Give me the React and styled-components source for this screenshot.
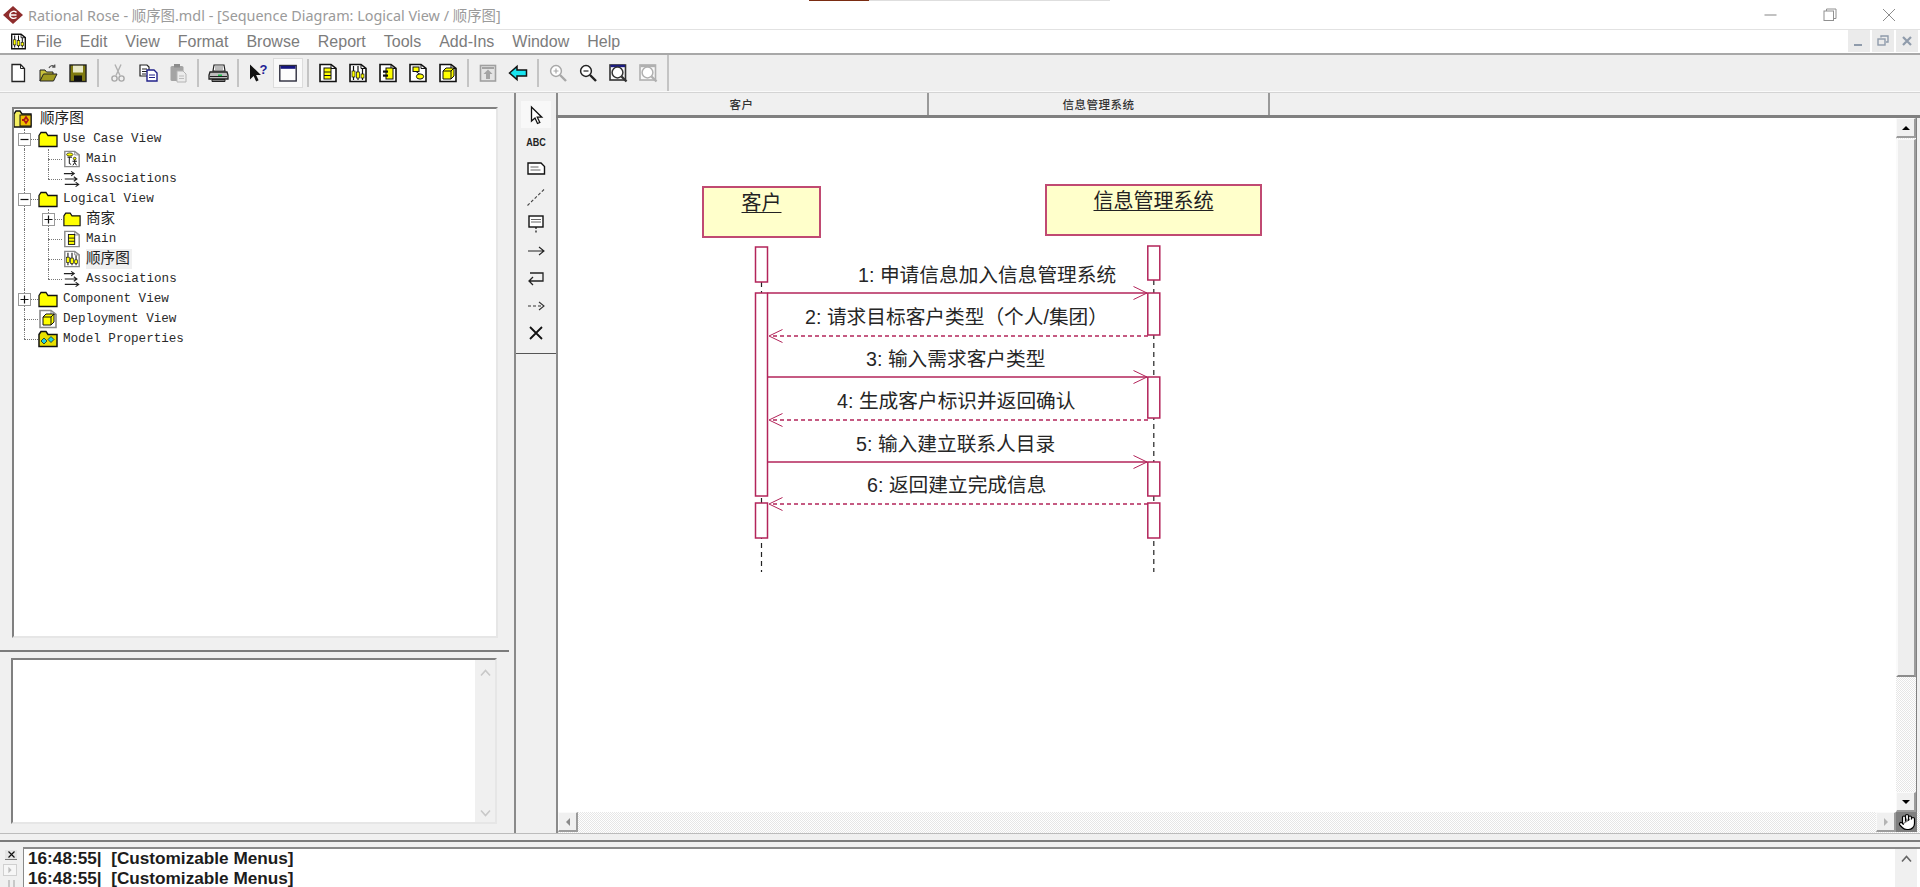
import styled, { createGlobalStyle } from 'styled-components'
import { Hand } from 'lucide-react'

const CJK = '"Noto Sans CJK SC"'

const Global = createGlobalStyle`
html, body { margin: 0; padding: 0; background: #f0f0f0; overflow: hidden; }
* { box-sizing: border-box; }
`

const Page = styled.div`
width: 1920px;
height: 887px;
display: flex;
flex-direction: column;
overflow: hidden;
background: #f0f0f0;
font-family: "Liberation Sans", ${CJK}, sans-serif;
`

/* ---------- title + menu ---------- */

const TitleBar = styled.div`
position: relative;
height: 30px;
flex: none;
display: flex;
align-items: center;
background: #fff;
border-bottom: 1px solid #e2e2e2;
padding-left: 3px;

&::before {
  content: '';
  position: absolute;
  top: 0;
  left: 809px;
  width: 301px;
  height: 1px;
  background: linear-gradient(to right, #7a2c12 0 60px, #dedede 60px);
}
`

const TitleText = styled.div`
margin-left: 5px;
font-family: "Noto Sans", ${CJK}, sans-serif;
font-size: 14.4px;
color: #9a9a9a;
white-space: pre;
`

const WinButtons = styled.div`
margin-left: auto;
margin-right: 2px;
display: flex;
`

const WinButton = styled.div`
width: 59px;
height: 29px;
display: flex;
align-items: center;
justify-content: center;
`

const MenuBar = styled.div`
height: 25px;
flex: none;
display: flex;
align-items: center;
background: #fff;
border-bottom: 2px solid #a8a8a8;
padding-left: 10px;
`

const MenuItems = styled.div`
display: flex;
gap: 18px;
margin-left: 9px;
font-size: 16px;
color: #7c7c7c;
`

const MdiButtons = styled.div`
margin-left: auto;
margin-right: 2px;
display: flex;
gap: 2px;
align-self: flex-start;
`

const MdiButton = styled.div`
width: 22px;
height: 22px;
background: #ebebeb;
display: flex;
align-items: center;
justify-content: center;
`

/* ---------- toolbar ---------- */

const Toolbar = styled.div`
height: 37px;
flex: none;
display: flex;
align-items: center;
padding-left: 3px;
background: #efefef;
border-bottom: 1px solid #fafafa;
`

const ToolButton = styled.div`
width: 30px;
height: 30px;
display: flex;
align-items: center;
justify-content: center;
background: ${p => (p.$pressed ? '#f9f9f9' : 'transparent')};
box-shadow: ${p => (p.$pressed ? 'inset 0 0 0 1px #dcdcdc' : 'none')};
`

const ToolSep = styled.div`
width: 10px;
height: ${p => (p.$tall ? 36 : 28)}px;
display: flex;
justify-content: center;

&::before {
  content: '';
  width: 2px;
  background: #c4c4c4;
}
`

/* ---------- workspace ---------- */

const Workspace = styled.div`
height: 741px;
flex: none;
display: flex;
border-top: 1px solid #d4d4d4;
`

const LeftPane = styled.div`
width: 514px;
flex: none;
display: flex;
flex-direction: column;
padding-top: 14px;
`

const Sunken = styled.div`
background: #fff;
border-style: solid;
border-width: 2px;
border-color: #808080 #e6e6e6 #e6e6e6 #808080;
`

const TreeBox = styled(Sunken)`
margin-left: 12px;
width: 486px;
height: 531px;
font-family: "Liberation Mono", ${CJK}, monospace;
font-size: 12.6px;
color: #2a2a2a;
overflow: hidden;
`

const TreeRow = styled.div`
height: 20px;
display: flex;
align-items: center;
white-space: pre;
`

const Guide = styled.div`
position: relative;
width: 24px;
height: 20px;
flex: none;

&::before {
  content: '';
  position: absolute;
  left: 10px;
  top: 0;
  bottom: ${p => (p.$type === 'end' ? '10px' : '0')};
  border-left: 1px dotted #777;
}

&::after {
  content: '';
  position: absolute;
  left: 10px;
  right: 0;
  top: 10px;
  border-top: ${p => (p.$type === 'pipe' ? 'none' : '1px dotted #777')};
}
`

const Expander = styled.div`
position: absolute;
left: 4px;
top: 4px;
width: 13px;
height: 13px;
z-index: 1;
background: #fff;
border: 1px solid #9a9a9a;
display: flex;
align-items: center;
justify-content: center;
`

const IconSlot = styled.div`
flex: none;
display: flex;
align-items: center;
justify-content: center;
width: ${p => (p.$level === 2 ? 18 : 20)}px;
margin-left: ${p => (p.$level === 2 ? 1 : p.$level === 0 ? -1 : 0)}px;
margin-right: ${p => (p.$level === 0 ? 7 : 5)}px;
`

const TreeLabel = styled.span`
font-size: ${p => (p.$cjk ? '14.6px' : 'inherit')};
padding: ${p => (p.$selected ? '1px 2px 1px 0' : '0')};
background: ${p => (p.$selected ? '#f0f0f0' : 'transparent')};
color: ${p => (p.$cjk ? '#222' : 'inherit')};
line-height: 18px;
`

const HSplit = styled.div`
margin-top: 12px;
width: 509px;
height: 2px;
flex: none;
background: #7c7c7c;
`

const DocBox = styled(Sunken)`
margin: 6px 0 0 11px;
width: 486px;
height: 166px;
display: flex;
justify-content: flex-end;
`

const DocScroll = styled.div`
width: 20px;
background: #f0f0f0;
display: flex;
flex-direction: column;
align-items: center;
justify-content: space-between;
padding: 9px 0 5px;
`

const ToolColumn = styled.div`
width: 44px;
flex: none;
display: flex;
flex-direction: column;
align-items: stretch;
background: #f0f0f0;
border-left: 2px solid #8a8a8a;
border-right: 2px solid #8a8a8a;
`

const Toolbox = styled.div`
height: 261px;
flex: none;
display: flex;
flex-direction: column;
align-items: center;
padding-top: 8px;
border-bottom: 1px solid #555;
`

const BoxTool = styled.div`
width: 30px;
height: 27.3px;
display: flex;
align-items: center;
justify-content: center;
background: ${p => (p.$pressed ? '#f8f8f8' : 'transparent')};
`

const AbcGlyph = styled.span`
font-size: 11px;
font-weight: bold;
color: #222;
transform: scaleX(0.82);
`

/* ---------- diagram ---------- */

const DiagramColumn = styled.div`
flex: 1;
min-width: 0;
display: flex;
flex-direction: column;
`

const ColumnHeader = styled.div`
height: 25px;
flex: none;
display: flex;
border-bottom: 3px solid #808080;
margin-left: -2px;
`

const HeaderCell = styled.div`
width: ${p => p.$w}px;
height: 22px;
flex: none;
display: flex;
align-items: center;
justify-content: center;
font-family: ${CJK}, sans-serif;
font-size: 11.5px;
font-weight: 500;
color: #333;
border-right: ${p => (p.$last ? 'none' : '2px solid #9a9a9a')};
letter-spacing: 0.5px;
`

const CanvasRow = styled.div`
flex: 1;
min-height: 0;
display: flex;
`

const Canvas = styled.div`
position: relative;
flex: 1;
background: #fff;
overflow: hidden;
`

const DiagramSvg = styled.svg`
position: absolute;
left: 0;
top: 0;
`

const ObjectBox = styled.div`
position: absolute;
left: ${p => p.$x - ORIGIN.x}px;
top: ${p => p.$y - ORIGIN.y}px;
width: ${p => p.$w}px;
height: ${p => p.$h}px;
background: #ffffcb;
border: 2px solid #c04a72;
text-align: center;
font-family: ${CJK}, sans-serif;
font-size: 20px;
line-height: 24px;
padding-top: 2px;
color: #222;
`

const ObjectName = styled.span`
text-decoration: underline;
text-underline-offset: 2px;
text-decoration-thickness: 1px;
`

const MessageLabel = styled.div`
position: absolute;
left: ${p => p.$x - ORIGIN.x}px;
top: ${p => p.$y - ORIGIN.y - 13}px;
height: 26px;
line-height: 26px;
font-family: "Liberation Sans", ${CJK}, sans-serif;
font-size: 19.7px;
color: #262626;
white-space: pre;
`

const VScroll = styled.div`
width: 21px;
flex: none;
display: flex;
flex-direction: column;
background: repeating-conic-gradient(#fff 0 25%, #e6e6e6 0 50%) 0 0 / 2px 2px;
border-right: 1px solid #808080;
margin-right: 3px;
`

const ScrollBtn = styled.div`
width: 20px;
height: 20px;
flex: none;
display: flex;
align-items: center;
justify-content: center;
background: #f0f0f0;
border-style: solid;
border-width: 1px 2px 2px 1px;
border-color: #fafafa #9c9c9c #9c9c9c #fafafa;
`

const VThumb = styled.div`
height: 538px;
flex: none;
margin-top: 1px;
background: #eeeeee;
border-style: solid;
border-width: 1px 2px 2px 2px;
border-color: #fafafa #9c9c9c #8c8c8c #fafafa;
`

const VSpacer = styled.div`
flex: 1;
`

const HScrollRow = styled.div`
height: 21px;
flex: none;
display: flex;
align-items: flex-start;
padding-right: 3px;
background: repeating-conic-gradient(#fff 0 25%, #e6e6e6 0 50%) 0 0 / 2px 2px;
`

const HSpacer = styled.div`
flex: 1;
`

const HandBox = styled.div`
width: 21px;
height: 20px;
flex: none;
background: #7f7f7f;
display: flex;
align-items: center;
justify-content: center;
`

/* ---------- log ---------- */

const LogGap = styled.div`
height: 14px;
flex: none;
border-top: 1px solid #bcbcbc;
display: flex;
flex-direction: column;
padding-top: 6px;

&::before {
  content: '';
  height: 2px;
  background: #7c7c7c;
}
`

const LogArea = styled.div`
flex: 1;
min-height: 0;
display: flex;
`

const LogGutter = styled.div`
width: 23px;
flex: none;
display: flex;
flex-direction: column;
align-items: center;
padding-top: 3px;
gap: 4px;
`

const LogClose = styled.div`
width: 12px;
height: 11px;
background: #e4e4e4;
border-bottom: 1px solid #777;
display: flex;
align-items: center;
justify-content: center;
margin-left: -1px;
`

const LogNext = styled.div`
width: 14px;
height: 12px;
background: #f6f6f6;
border: 1px solid #d0d0d0;
display: flex;
align-items: center;
justify-content: center;
margin-left: -3px;
`

const LogGrip = styled.div`
width: 7px;
height: 8px;
border-left: 2px solid #c8c8c8;
border-right: 2px solid #c8c8c8;
`

const LogBox = styled.div`
flex: 1;
display: flex;
background: #fff;
border-top: 2px solid #8a8a8a;
border-left: 1px solid #8a8a8a;
padding-left: 4px;
`

const LogLines = styled.div`
flex: 1;
font-size: 17.2px;
font-weight: bold;
line-height: 19.5px;
color: #1c1c1c;
white-space: pre;
`

const LogScroll = styled.div`
width: 22px;
margin-right: 3px;
background: #f0f0f0;
display: flex;
justify-content: center;
padding-top: 6px;
`

/* ---------- icons ---------- */

const Ico = ({ size = 20, w, h, vb = '0 0 20 20', children }) => (
  <svg width={w || size} height={h || size} viewBox={vb} fill="none">
    {children}
  </svg>
)

const DocIcon = ({ size = 20, tone = '#111', children }) => (
  <Ico size={size}>
    <path d="M2 1.5h11l5 4v13H2z" fill="#fff" stroke={tone} strokeWidth="1.6" />
    <path d="M13 1.5v4h5" stroke={tone} strokeWidth="1" />
    {children}
  </Ico>
)

const classBody = (
  <>
    <rect x="6" y="5" width="7" height="11" fill="#ff0" stroke="#111" />
    <path d="M6 9h7M6 12.5h7" stroke="#111" />
  </>
)
const seqBody = (
  <>
    <path d="M5.5 3v14M10 3v14M14.5 6v11" stroke="#111" strokeWidth="1.2" />
    <rect x="4" y="8" width="3" height="6" fill="#ff0" stroke="#111" strokeWidth=".7" />
    <rect x="8.5" y="9" width="3" height="6" fill="#ff0" stroke="#111" strokeWidth=".7" />
    <rect x="13" y="11" width="3" height="4" fill="#ff0" stroke="#111" strokeWidth=".7" />
  </>
)
const compBody = (
  <>
    <rect x="8" y="5" width="7" height="11" fill="#ff0" stroke="#111" />
    <rect x="5" y="7.5" width="5" height="2.2" fill="#111" />
    <rect x="5" y="11.5" width="5" height="2.2" fill="#111" />
  </>
)
const useBody = (
  <>
    <rect x="5" y="4" width="6" height="4.5" fill="#ff0" stroke="#111" />
    <path d="M8 8.5l4 3" stroke="#111" />
    <ellipse cx="12" cy="13.5" rx="3.6" ry="2.6" fill="#ff0" stroke="#111" />
  </>
)
const actorBody = (
  <>
    <ellipse cx="7.5" cy="5" rx="3.5" ry="1.8" fill="#ff0" stroke="#111" strokeWidth=".8" />
    <path d="M5 8h5M7 8v7l2 1" stroke="#111" strokeWidth="1.1" />
    <circle cx="13" cy="9.5" r="1.5" fill="#ff0" stroke="#111" strokeWidth=".8" />
    <path d="M13 11v3M10.5 12.5h5M13 14l-2 3M13 14l2 3" stroke="#111" strokeWidth="1.1" />
  </>
)
const deployBody = (
  <>
    <path d="M5 8l3-3h8v8l-3 3H5z" fill="#ff0" stroke="#111" />
    <path d="M5 8h8v8M13 8l3-3" stroke="#111" />
  </>
)

const Folder = () => (
  <Ico w={20} h={18} vb="0 0 20 18">
    <path d="M1 5.5l2-3h5l2 3h9v11H1z" fill="#ff0" stroke="#111" strokeWidth="1.3" />
  </Ico>
)

const PropsFolder = () => (
  <Ico w={20} h={18} vb="0 0 20 18">
    <path d="M1 4.5l2-3h5l2 3h9v12H1z" fill="#e8e000" stroke="#111" strokeWidth="1.5" />
    <path d="M6 8l3 3-3 3-3-3zM13 6.5l3 3-3 3-3-3z" fill="#20d0e0" stroke="#111" strokeWidth=".7" />
  </Ico>
)

const RootIcon = () => (
  <Ico size={20}>
    <path d="M1 5l2-3h4l2 3h9v13H1z" fill="#f4ee60" stroke="#111" strokeWidth="1.4" />
    <rect x="7" y="6" width="11" height="11" fill="#f0c000" stroke="#111" />
    <path d="M9 11h2l2-3 2 3-2 3-2-3" stroke="#b01818" strokeWidth="1.8" />
  </Ico>
)

const AssocIcon = () => (
  <Ico w={18} h={20}>
    <path d="M1 4h11M9 1.5L12.5 4 9 6.5M2 10h13M12 7.5l3.5 2.5-3.5 2.5M2 16h15M14 13.5l3.5 2.5-3.5 2.5" stroke="#222" strokeWidth="1.2" />
  </Ico>
)

const NewIcon = () => (
  <Ico>
    <path d="M4 1.5h8.5l4 4v13H4z" fill="#fff" stroke="#222" strokeWidth="1.3" />
    <path d="M12.5 1.5v4h4" stroke="#222" />
  </Ico>
)
const OpenIcon = () => (
  <Ico>
    <path d="M2 7h5l1.5 2H15v3H6l-4 6z" fill="#c9c23c" stroke="#222" />
    <path d="M2 18l3.5-7H19l-3.5 7z" fill="#a09a20" stroke="#222" />
    <path d="M11 5c1-2.5 3.5-3 5.5-1.5M16.8 1.5v2.6h-2.6" stroke="#555" strokeWidth="1.2" />
  </Ico>
)
const SaveIcon = () => (
  <Ico>
    <rect x="2" y="2" width="16" height="16.5" fill="#7f7a10" stroke="#222" strokeWidth="1.4" />
    <rect x="5" y="2.7" width="10" height="6.8" fill="#e9e9c8" />
    <rect x="6" y="12.5" width="8" height="5.5" fill="#111" />
  </Ico>
)
const CutIcon = () => (
  <Ico>
    <path d="M7 1.5l5 11M13 1.5l-5 11" stroke="#b0b0b0" strokeWidth="1.4" />
    <circle cx="6.5" cy="15.5" r="2.6" stroke="#a8a8a8" strokeWidth="1.4" />
    <circle cx="13.5" cy="15.5" r="2.6" stroke="#a8a8a8" strokeWidth="1.4" />
  </Ico>
)
const CopyIcon = () => (
  <Ico>
    <path d="M2 2h7l2 2v9H2z" fill="#fff" stroke="#222" strokeWidth="1.2" />
    <path d="M4 6h5M4 8.5h5M4 11h4" stroke="#222" />
    <path d="M9 7h7l3 3v8H9z" fill="#fff" stroke="#22228a" strokeWidth="1.4" />
    <path d="M11 12h6M11 14.5h6" stroke="#22228a" />
  </Ico>
)
const PasteIcon = () => (
  <Ico>
    <rect x="2.5" y="3" width="13" height="15" rx="1.5" fill="#a4a4a4" />
    <rect x="6" y="1" width="6" height="3.5" fill="#8c8c8c" />
    <path d="M9 8h6l3 3v8H9z" fill="#ececec" stroke="#b4b4b4" />
    <path d="M11 13h5M11 15.5h5" stroke="#bcbcbc" />
  </Ico>
)
const PrintIcon = () => (
  <Ico w={21} h={20} vb="0 0 21 20">
    <path d="M6 2h10l1 6H5z" fill="#fff" stroke="#222" strokeWidth="1.2" />
    <path d="M7 4h8M7 6h8" stroke="#777" />
    <path d="M2 9h17l1 3v4H1v-4z" fill="#bdbdbd" stroke="#222" strokeWidth="1.3" />
    <path d="M2 13.5h17" stroke="#222" />
    <rect x="10" y="11.5" width="4" height="1.5" fill="#22c050" />
    <path d="M4 16.5h13v2H4z" fill="#777" stroke="#222" />
  </Ico>
)
const HelpIcon = () => (
  <Ico>
    <path d="M2 1.5v15l3.6-3.4 2.6 5.4 2.4-1.2-2.5-5.2H13z" fill="#111" />
    <text x="11.5" y="10.5" fontFamily="Liberation Sans" fontWeight="bold" fontSize="13" fill="#1e1e96">?</text>
  </Ico>
)
const BrowseIcon = () => (
  <Ico>
    <rect x="1.8" y="2.5" width="16.4" height="15.5" fill="#fdfdfd" stroke="#2c2c3c" strokeWidth="1.4" />
    <rect x="2.5" y="3" width="15" height="2.8" fill="#16167e" />
  </Ico>
)
const UpDocIcon = () => (
  <Ico>
    <rect x="2.5" y="2.5" width="15" height="15.5" fill="#e4e4e4" stroke="#a0a0a0" strokeWidth="1.6" />
    <path d="M4 5h12" stroke="#888" strokeWidth="1.4" />
    <path d="M10 6.5l4.5 4.5h-2.5v5H8v-5H5.5z" fill="#a4a4a4" />
  </Ico>
)
const BackIcon = () => (
  <Ico>
    <path d="M1.5 10L9 3.5V7h9.5v6H9v3.5z" fill="#18e4f0" stroke="#111" strokeWidth="1.5" />
  </Ico>
)
const LensIcon = ({ tone, mark, frame }) => (
  <Ico>
    {frame && <rect x="2" y="2" width="15.5" height="15" fill="#f8f8f8" stroke={tone} strokeWidth="1.6" />}
    {frame && <path d="M2.5 3h14.5" stroke={frame} strokeWidth="2.4" />}
    <circle cx={frame ? 9.5 : 8} cy={frame ? 9.5 : 8} r="5.4" fill="#fff" stroke={tone} strokeWidth="1.5" />
    <path d={frame ? 'M13.5 13.5l5 5' : 'M12 12l6 6'} stroke={tone} strokeWidth="2.4" />
    {mark === 'plus' && <path d="M5.5 8h5M8 5.5v5" stroke={tone} strokeWidth="1.2" />}
    {mark === 'minus' && <path d="M5.5 8h5" stroke={tone} strokeWidth="1.2" />}
  </Ico>
)
const SelectTool = () => (
  <Ico>
    <path d="M5.5 2v14l3.5-3 2.5 5.5 2.3-1-2.5-5.3h4.5z" fill="#fff" stroke="#111" strokeWidth="1.3" />
  </Ico>
)
const NoteTool = () => (
  <Ico>
    <path d="M2 4h13l3.5 3.5V15H2z" fill="#fff" stroke="#111" strokeWidth="1.4" />
    <path d="M4.5 8h8M4.5 11h10" stroke="#666" />
  </Ico>
)
const AnchorTool = () => (
  <Ico>
    <path d="M1.5 18.5L18.5 2" stroke="#444" strokeWidth="1.1" strokeDasharray="3 2" />
  </Ico>
)
const NoteAnchorTool = () => (
  <Ico>
    <rect x="3" y="2" width="14" height="11" fill="#fff" stroke="#111" strokeWidth="1.4" />
    <path d="M5 5.5h10M5 8h10" stroke="#666" />
    <path d="M10 13v6" stroke="#111" strokeDasharray="2 1.5" strokeWidth="1.2" />
  </Ico>
)
const ArrowTool = () => (
  <Ico>
    <path d="M2 10h16M13 6l5 4-5 4" stroke="#222" strokeWidth="1.1" />
  </Ico>
)
const ReturnTool = () => (
  <Ico>
    <path d="M4 5h13v8H3M7 9l-4 4 4 4" stroke="#222" strokeWidth="1.3" />
  </Ico>
)
const DashTool = () => (
  <Ico>
    <path d="M2 10h16" stroke="#333" strokeWidth="1.1" strokeDasharray="3 2" />
    <path d="M13 6l5 4-5 4" stroke="#333" strokeWidth="1.1" />
  </Ico>
)
const CrossTool = () => (
  <Ico>
    <path d="M4 4l12 12M16 4L4 16" stroke="#111" strokeWidth="1.8" />
  </Ico>
)
const Tri = ({ dir, tone = '#000', s = 10 }) => {
  const d = {
    up: 'M1 7h8L5 3z',
    down: 'M1 3h8L5 7z',
    left: 'M7 1v8L3 5z',
    right: 'M3 1v8l4-4z',
  }[dir]
  return (
    <Ico size={s} vb="0 0 10 10">
      <path d={d} fill={tone} />
    </Ico>
  )
}
const Chevron = ({ up, tone }) => (
  <Ico w={11} h={8} vb="0 0 11 8">
    <path d={up ? 'M1 6.5l4.5-5 4.5 5' : 'M1 1.5l4.5 5 4.5-5'} stroke={tone} strokeWidth="1.6" />
  </Ico>
)
const RoseLogo = () => (
  <Ico w={20} h={18} vb="0 0 20 18">
    <path d="M10 0l10 9-10 9L0 9z" fill="#8f2d2d" />
    <path d="M13.5 6.5C12 4.5 8 5 7 8c-1 3.5 3 5.5 6.5 3.5M7.5 9h6" stroke="#fff" strokeWidth="1.4" />
  </Ico>
)
const MinGlyph = () => (
  <Ico size={14} vb="0 0 14 14">
    <path d="M0.5 7h12" stroke="#909090" strokeWidth="1.1" />
  </Ico>
)
const RestoreGlyph = () => (
  <Ico size={14} vb="0 0 14 14">
    <rect x="1" y="3" width="9.5" height="9.5" stroke="#909090" />
    <path d="M3.5 3V1h9.5v9.5h-2.5" stroke="#909090" />
  </Ico>
)
const CloseGlyph = () => (
  <Ico size={14} vb="0 0 14 14">
    <path d="M1 1l12 12M13 1L1 13" stroke="#8c8c8c" />
  </Ico>
)

const MDI_TONE = '#8f9bab'

/* ---------- data ---------- */

const ORIGIN = { x: 558, y: 118 }

const MENUS = ['File', 'Edit', 'View', 'Format', 'Browse', 'Report', 'Tools', 'Add-Ins', 'Window', 'Help']

const TOOLS = [
  <NewIcon />, <OpenIcon />, <SaveIcon />, 'sep',
  <CutIcon />, <CopyIcon />, <PasteIcon />, 'sep',
  <PrintIcon />, 'sep',
  <HelpIcon />, 'pressed', 'sep',
  <DocIcon>{classBody}</DocIcon>, <DocIcon>{seqBody}</DocIcon>, <DocIcon>{compBody}</DocIcon>,
  <DocIcon>{useBody}</DocIcon>, <DocIcon>{deployBody}</DocIcon>, 'sep',
  <UpDocIcon />, <BackIcon />, 'sep',
  <LensIcon tone="#a8a8a8" mark="plus" />, <LensIcon tone="#222" mark="minus" />,
  <LensIcon tone="#333" frame="#1c1c80" />, <LensIcon tone="#b0b0b0" frame="#b0b0b0" />,
  'tall',
]

const TREE_TONE = '#8a8a8a'

const TREE = [
  { level: 0, icon: <RootIcon />, label: '顺序图', cjk: true },
  { guides: ['tee'], exp: 'minus', level: 1, icon: <Folder />, label: 'Use Case View' },
  { guides: ['pipe', 'tee'], level: 2, icon: <DocIcon size={18} tone={TREE_TONE}>{actorBody}</DocIcon>, label: 'Main' },
  { guides: ['pipe', 'end'], level: 2, icon: <AssocIcon />, label: 'Associations' },
  { guides: ['tee'], exp: 'minus', level: 1, icon: <Folder />, label: 'Logical View' },
  { guides: ['pipe', 'tee'], exp: 'plus', level: 2, icon: <Folder />, label: '商家', cjk: true },
  { guides: ['pipe', 'tee'], level: 2, icon: <DocIcon size={18} tone={TREE_TONE}>{classBody}</DocIcon>, label: 'Main' },
  { guides: ['pipe', 'tee'], level: 2, icon: <DocIcon size={18} tone={TREE_TONE}>{seqBody}</DocIcon>, label: '顺序图', cjk: true, selected: true },
  { guides: ['pipe', 'end'], level: 2, icon: <AssocIcon />, label: 'Associations' },
  { guides: ['tee'], exp: 'plus', level: 1, icon: <Folder />, label: 'Component View' },
  { guides: ['tee'], level: 1, icon: <DocIcon tone={TREE_TONE}>{deployBody}</DocIcon>, label: 'Deployment View' },
  { guides: ['end'], level: 1, icon: <PropsFolder />, label: 'Model Properties' },
]

const BOX_TOOLS = [
  <SelectTool />, <AbcGlyph>ABC</AbcGlyph>, <NoteTool />, <AnchorTool />,
  <NoteAnchorTool />, <ArrowTool />, <ReturnTool />, <DashTool />, <CrossTool />,
]

const LEFT_X = 761.5
const RIGHT_X = 1153.8

const BARS = [
  [LEFT_X, 247, 282], [LEFT_X, 293, 496], [LEFT_X, 503, 538],
  [RIGHT_X, 246, 280], [RIGHT_X, 293, 335], [RIGHT_X, 377, 418], [RIGHT_X, 462, 496], [RIGHT_X, 503, 538],
]

const ARROWS = [
  { y: 293, right: true },
  { y: 336, right: false },
  { y: 377, right: true },
  { y: 420, right: false },
  { y: 462, right: true },
  { y: 504, right: false },
]

const LABELS = [
  { x: 858, y: 275, text: '1: 申请信息加入信息管理系统' },
  { x: 805, y: 317, text: '2: 请求目标客户类型（个人/集团）' },
  { x: 866, y: 359, text: '3: 输入需求客户类型' },
  { x: 837, y: 401, text: '4: 生成客户标识并返回确认' },
  { x: 856, y: 444, text: '5: 输入建立联系人目录' },
  { x: 867, y: 485, text: '6: 返回建立完成信息' },
]

const CRIMSON = '#b3245a'

function Diagram() {
  return (
    <DiagramSvg width="1338" height="695" viewBox={`${ORIGIN.x} ${ORIGIN.y} 1338 695`} fill="none">
      <path d={`M${LEFT_X} 282V572M${RIGHT_X} 280V572`} stroke="#222" strokeWidth="1.2" strokeDasharray="5 4" />
      {BARS.map(([x, a, b], i) => (
        <rect key={i} x={x - 6} y={a} width="12" height={b - a} fill="#fff" stroke={CRIMSON} strokeWidth="1.5" />
      ))}
      {ARROWS.map(({ y, right }) =>
        right ? (
          <g key={y} stroke={CRIMSON} strokeWidth="1.4">
            <path d={`M767.5 ${y}H1147`} />
            <path d={`M1133.5 ${y - 6.5}L1147 ${y}L1133.5 ${y + 6.5}`} strokeWidth="1" />
          </g>
        ) : (
          <g key={y} stroke={CRIMSON} strokeWidth="1.3">
            <path d={`M1148 ${y}H770`} strokeDasharray="4 3" />
            <path d={`M782.5 ${y - 6.5}L769 ${y}L782.5 ${y + 6.5}`} strokeWidth="1" />
          </g>
        )
      )}
    </DiagramSvg>
  )
}

export default function App() {
  return (
    <Page>
      <Global />
      <TitleBar>
        <RoseLogo />
        <TitleText>Rational Rose - 顺序图.mdl - [Sequence Diagram: Logical View / 顺序图]</TitleText>
        <WinButtons>
          <WinButton><MinGlyph /></WinButton>
          <WinButton><RestoreGlyph /></WinButton>
          <WinButton><CloseGlyph /></WinButton>
        </WinButtons>
      </TitleBar>

      <MenuBar>
        <DocIcon size={17}>{seqBody}</DocIcon>
        <MenuItems>
          {MENUS.map(m => <span key={m}>{m}</span>)}
        </MenuItems>
        <MdiButtons>
          <MdiButton>
            <Ico size={14} vb="0 0 14 14"><path d="M2 11h8" stroke={MDI_TONE} strokeWidth="2" /></Ico>
          </MdiButton>
          <MdiButton>
            <Ico size={14} vb="0 0 14 14">
              <rect x="2" y="5" width="7" height="6" stroke={MDI_TONE} strokeWidth="1.4" />
              <path d="M5 3.5V2h7v6h-2" stroke={MDI_TONE} strokeWidth="1.4" />
            </Ico>
          </MdiButton>
          <MdiButton>
            <Ico size={14} vb="0 0 14 14"><path d="M3 3l8 8M11 3l-8 8" stroke={MDI_TONE} strokeWidth="2.2" /></Ico>
          </MdiButton>
        </MdiButtons>
      </MenuBar>

      <Toolbar>
        {TOOLS.map((t, i) => {
          if (t === 'sep') return <ToolSep key={i} />
          if (t === 'tall') return <ToolSep key={i} $tall />
          if (t === 'pressed') return <ToolButton key={i} $pressed><BrowseIcon /></ToolButton>
          return <ToolButton key={i}>{t}</ToolButton>
        })}
      </Toolbar>

      <Workspace>
        <LeftPane>
          <TreeBox>
            {TREE.map((r, i) => (
              <TreeRow key={i}>
                {(r.guides || []).map((g, j) => {
                  const last = j === r.guides.length - 1
                  return (
                    <Guide key={j} $type={g}>
                      {last && r.exp && (
                        <Expander>
                          <Ico size={9} vb="0 0 9 9">
                            <path d={r.exp === 'plus' ? 'M.5 4.5h8M4.5 .5v8' : 'M.5 4.5h8'} stroke="#111" strokeWidth="1.2" />
                          </Ico>
                        </Expander>
                      )}
                    </Guide>
                  )
                })}
                <IconSlot $level={r.level}>{r.icon}</IconSlot>
                <TreeLabel $cjk={r.cjk} $selected={r.selected}>{r.label}</TreeLabel>
              </TreeRow>
            ))}
          </TreeBox>
          <HSplit />
          <DocBox>
            <DocScroll>
              <Chevron up tone="#c8c8c8" />
              <Chevron tone="#c8c8c8" />
            </DocScroll>
          </DocBox>
        </LeftPane>

        <ToolColumn>
          <Toolbox>
            {BOX_TOOLS.map((t, i) => (
              <BoxTool key={i} $pressed={i === 0}>{t}</BoxTool>
            ))}
          </Toolbox>
        </ToolColumn>

        <DiagramColumn>
          <ColumnHeader>
            <HeaderCell $w={373}>客户</HeaderCell>
            <HeaderCell $w={341}>信息管理系统</HeaderCell>
            <HeaderCell $w={650} $last />
          </ColumnHeader>
          <CanvasRow>
            <Canvas>
              <Diagram />
              <ObjectBox $x={702} $y={186} $w={119} $h={52}><ObjectName>客户</ObjectName></ObjectBox>
              <ObjectBox $x={1045} $y={184} $w={217} $h={52}><ObjectName>信息管理系统</ObjectName></ObjectBox>
              {LABELS.map(l => (
                <MessageLabel key={l.text} $x={l.x} $y={l.y}>{l.text}</MessageLabel>
              ))}
            </Canvas>
            <VScroll>
              <ScrollBtn><Tri dir="up" /></ScrollBtn>
              <VThumb />
              <VSpacer />
              <ScrollBtn><Tri dir="down" /></ScrollBtn>
            </VScroll>
          </CanvasRow>
          <HScrollRow>
            <ScrollBtn><Tri dir="left" tone="#8a8a8a" /></ScrollBtn>
            <HSpacer />
            <ScrollBtn><Tri dir="right" tone="#b4b4b4" /></ScrollBtn>
            <HandBox><Hand size={18} color="#000" fill="#fff" strokeWidth={1.6} /></HandBox>
          </HScrollRow>
        </DiagramColumn>
      </Workspace>

      <LogGap />
      <LogArea>
        <LogGutter>
          <LogClose>
            <Ico size={7} vb="0 0 7 7"><path d="M.5 .5l6 6M6.5 .5l-6 6" stroke="#111" strokeWidth="1.2" /></Ico>
          </LogClose>
          <LogNext><Tri dir="right" tone="#bdbdbd" s={8} /></LogNext>
          <LogGrip />
        </LogGutter>
        <LogBox>
          <LogLines>
            <div>16:48:55|  [Customizable Menus]</div>
            <div>16:48:55|  [Customizable Menus]</div>
          </LogLines>
          <LogScroll><Chevron up tone="#666" /></LogScroll>
        </LogBox>
      </LogArea>
    </Page>
  )
}
